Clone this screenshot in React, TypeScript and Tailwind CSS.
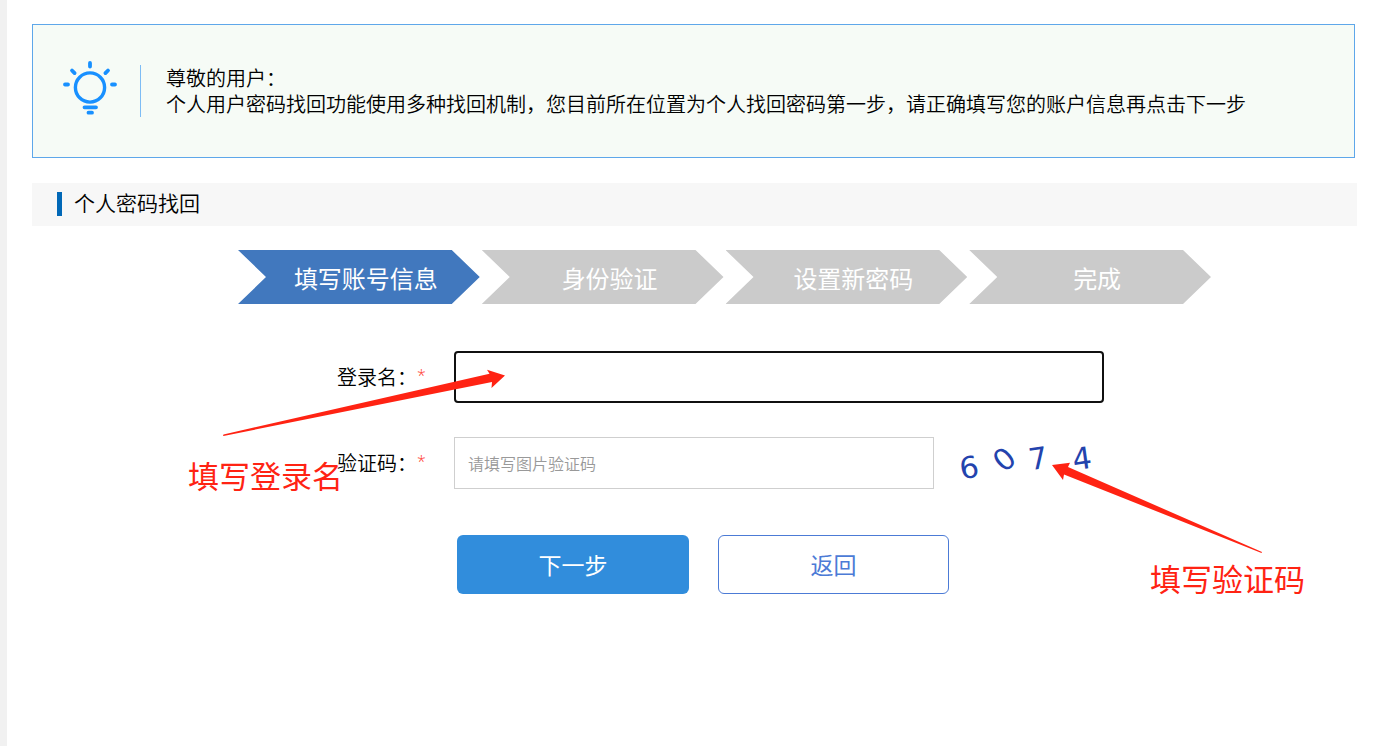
import React from "react";
import clsx from "clsx";

const steps = ["填写账号信息", "身份验证", "设置新密码", "完成"];

const captcha = [
  { char: "6", x: 11, y: 30, rotate: -10 },
  { char: "0", x: 46, y: 22, rotate: -40 },
  { char: "7", x: 80, y: 21, rotate: -8 },
  { char: "4", x: 124, y: 21, rotate: -8 },
];

function BulbIcon() {
  return (
    <svg viewBox="0 0 59 64" className="h-16 w-[59px] shrink-0" fill="none" stroke="#1890ff" strokeWidth="4" strokeLinecap="round" aria-hidden="true">
      <circle cx="29" cy="28.500" r="14.6" strokeWidth="3.4" />
      <path d="M29 4v3.500M11 11.500l2.6 2.6M47 11.500l-2.6 2.6M4 25.5h3M51 25.5h3" strokeWidth="3.8" />
      <path d="M23.500 48.3h11.500M27.500 53.700h3.500" strokeWidth="3.8" />
    </svg>
  );
}

function Captcha() {
  return (
    <svg viewBox="0 0 140 52" className="ml-6 h-[52px] w-[140px] shrink-0" fill="#2343ad" fontFamily="DejaVu Sans, sans-serif" fontWeight="400" fontSize="30" textAnchor="middle">
      {captcha.map((item) => (
        <text key={item.char} transform={`translate(${item.x} ${item.y}) rotate(${item.rotate})`} y="11">
          {item.char}
        </text>
      ))}
    </svg>
  );
}

function FieldLabel({ htmlFor, text }: { htmlFor: string; text: string }) {
  return (
    <label htmlFor={htmlFor} className="flex w-[117px] shrink-0 items-start text-xl">
      {text}
      <span className="font-['Open_Sans',sans-serif] text-base leading-6 text-[#ff3b30]">*</span>
    </label>
  );
}

export default function App() {
  return (
    <main className="min-h-screen border-l-[7px] border-[#f1f1f1] bg-white pb-10 pl-[25px] pr-[22px] pt-6 font-['Noto_Sans_CJK_SC',sans-serif] font-[350] text-black">
      {/* Notice */}
      <section className="mr-0.5 flex items-center border border-[#5ea7ea] bg-[#f6fbf6] px-7 py-[34px]">
        <BulbIcon />
        <div className="ml-5 border-l border-[#7dbcf5] pl-[25px] text-xl leading-[26px]">
          <p>尊敬的用户：</p>
          <p>个人用户密码找回功能使用多种找回机制，您目前所在位置为个人找回密码第一步，请正确填写您的账户信息再点击下一步</p>
        </div>
      </section>

      {/* Title */}
      <div className="mt-[25px] flex h-[43px] items-start bg-[#f7f7f7] pl-[25px] pt-[9px]">
        <span className="h-6 w-[5px] bg-[#0168b7]" />
        <h1 className="ml-3 text-[21px] leading-5">个人密码找回</h1>
      </div>

      {/* Steps */}
      <ol className="ml-[206px] mt-6 grid max-w-[973px] grid-cols-4 gap-0.5 text-2xl text-white">
        {steps.map((step, index) => (
          <li
            key={step}
            className={clsx(
              "flex h-[54px] items-center justify-center pl-[14px] pt-0.5 font-normal [clip-path:polygon(0_0,calc(100%-28px)_0,100%_50%,calc(100%-28px)_100%,0_100%,28px_50%)]",
              index === 0 ? "bg-[#4178be]" : "bg-[#cbcbcb]"
            )}
          >
            {step}
          </li>
        ))}
      </ol>

      <form className="relative mt-[47px] pl-[305px]" onSubmit={(e) => e.preventDefault()}>
        <div className="flex items-center">
          <FieldLabel htmlFor="login" text="登录名：" />
          <input id="login" type="text" className="h-[52px] w-full max-w-[650px] rounded border-2 border-[#101010] px-3 text-base outline-none" />
        </div>

        <div className="mt-[34px] flex items-center">
          <FieldLabel htmlFor="code" text="验证码：" />
          <input
            id="code"
            type="text"
            placeholder="请填写图片验证码"
            className="h-[52px] w-full max-w-[480px] border border-[#cfcfcf] px-[13px] text-base outline-none placeholder:text-[#999999]"
          />
          <Captcha />
        </div>

        <div className="ml-[120px] mt-[46px] flex gap-[29px] text-[23px]">
          <button type="submit" className="h-[59px] w-[232px] rounded-md bg-[#318ddc] font-normal text-white">
            下一步
          </button>
          <button type="button" className="h-[59px] w-[231px] rounded-md border border-[#4c7bd6] bg-white font-normal text-[#4c7bd6]">
            返回
          </button>
        </div>

        {/* Callouts over the form */}
        <svg viewBox="0 0 285 68" className="pointer-events-none absolute left-[190px] top-[18px] h-[68px] w-[285px]" fill="#ff2313" aria-hidden="true">
          <path d="M1 66.500L1.500 65.500L267.500 4.700L265 .7L283 6.500L269.500 19L270 13L1.500 67Z" />
        </svg>
        <p className="pointer-events-none absolute left-[156px] top-[106px] whitespace-nowrap text-[31px] font-normal leading-9 text-[#ff2313]">填写登录名</p>

        <svg viewBox="0 0 212 92" className="pointer-events-none absolute left-[1019px] top-[111px] h-[92px] w-[212px]" fill="#ff2313" aria-hidden="true">
          <path d="M1 3L19 .7L17 5L211 90L210.500 91L13 12.500L12 18Z" />
        </svg>
        <p className="pointer-events-none absolute left-[1118px] top-[209px] whitespace-nowrap text-[31px] font-normal leading-9 text-[#ff2313]">填写验证码</p>
      </form>
    </main>
  );
}
